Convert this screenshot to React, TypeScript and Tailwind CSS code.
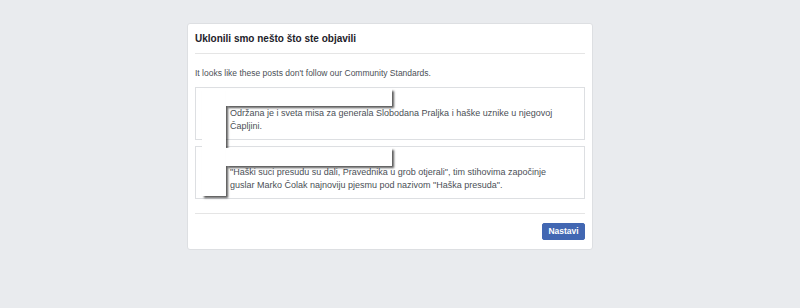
const posts = [
  "Održana je i sveta misa za generala Slobodana Praljka i haške uznike u njegovoj Čapljini.",
  "\"Haški suci presudu su dali, Pravednika u grob otjerali\", tim stihovima započinje guslar Marko Čolak najnoviju pjesmu pod nazivom \"Haška presuda\".",
];

const App = () => {
  return (
    <div className="w-[800px] h-[308px] bg-[#e9ebee] pt-[23px] font-['Liberation_Sans',Arial,sans-serif]">
      <div className="ml-[187px] w-[406px] h-[227px] bg-white border border-[#dddfe2] rounded-[3px] px-[7px] flex flex-col">
        <div className="pt-[8px] pb-[7px] border-b border-[#e5e5e5]">
          <h1 className="text-[10px] leading-[14px] font-bold text-[#1d2129]">
            Uklonili smo nešto što ste objavili
          </h1>
        </div>
        <p className="mt-[13px] text-[8.5px] leading-[12px] text-[#4b4f56]">
          It looks like these posts don't follow our Community Standards.
        </p>
        <div className="relative mt-[8px] flex flex-col gap-[6px]">
          {posts.map((text, index) => (
            <div
              key={index}
              className="h-[53px] border border-[#dddfe2] pt-[19px] pl-[34px] pr-[16px]"
            >
              <p className="text-[9px] leading-[13px] text-[#4b4f56]">{text}</p>
            </div>
          ))}
          <div className="absolute z-10 left-[7px] top-[2px] w-[24px] h-[107px] bg-white shadow-[2px_2px_2px_rgba(0,0,0,0.65)]" />
          <div className="absolute z-10 left-[31px] top-[2px] w-[166px] h-[17px] bg-white shadow-[2px_2px_2px_rgba(0,0,0,0.65)]" />
          <div className="absolute z-10 left-[31px] top-[61px] w-[166px] h-[18px] bg-white shadow-[2px_2px_2px_rgba(0,0,0,0.65)]" />
        </div>
        <div className="mt-[14px] border-t border-[#e5e5e5] flex justify-end pt-[9px]">
          <button className="w-[43px] h-[17px] bg-[#4267b2] border border-[#4267b2] rounded-[2px] text-white text-[8.5px] font-bold leading-none">
            Nastavi
          </button>
        </div>
      </div>
    </div>
  );
};

export default App;
